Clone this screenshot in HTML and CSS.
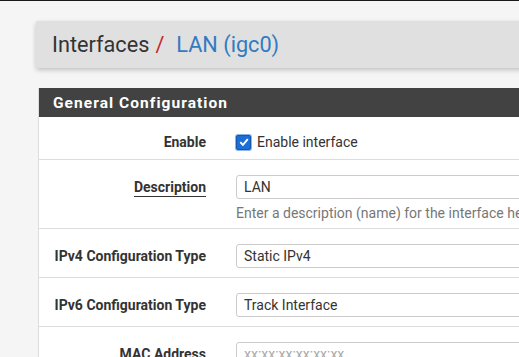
FILE: index.html
```html
<!DOCTYPE html>
<html>
<head>
<meta charset="utf-8">
<link rel="stylesheet" href="styles.css">
</head>
<body>
<div class="topline"></div>
<div class="page">
  <div class="breadcrumb">
    <span class="crumb">Interfaces</span><span class="sep">/</span><span class="link">LAN (igc0)</span>
  </div>
  <div class="panel">
    <div class="panel-heading">General Configuration</div>
    <div class="row row-enable">
      <div class="label">Enable</div>
      <div class="field">
        <label class="check"><span class="box"><svg width="12" height="12" viewBox="0 0 12 12"><path d="M2.3 6.2 L4.9 8.8 L9.8 3.2" fill="none" stroke="#fff" stroke-width="1.9"/></svg></span>Enable interface</label>
      </div>
    </div>
    <div class="row row-desc">
      <div class="label"><span class="u">Description</span></div>
      <div class="field">
        <div class="input">LAN</div>
        <div class="help">Enter a description (name) for the interface here.</div>
      </div>
    </div>
    <div class="row row-sel">
      <div class="label">IPv4 Configuration Type</div>
      <div class="field"><div class="input">Static IPv4</div></div>
    </div>
    <div class="row row-sel">
      <div class="label">IPv6 Configuration Type</div>
      <div class="field"><div class="input">Track Interface</div></div>
    </div>
    <div class="row row-sel">
      <div class="label">MAC Address</div>
      <div class="field"><div class="input placeholder">xx:xx:xx:xx:xx:xx</div></div>
    </div>
  </div>
</div>
</body>
</html>
```
FILE: styles.css
```css
html, body {
  margin: 0;
  padding: 0;
}
body {
  background: #f5f5f5;
  font-family: Roboto, "Liberation Sans", sans-serif;
  color: #333;
  overflow: hidden;
  width: 519px;
  height: 357px;
}
.topline {
  height: 1px;
  background: #1a1a1a;
}
.page {
  padding: 20px 0 0 36px;
}
.breadcrumb {
  width: 700px;
  height: 47px;
  background: #e0e0e0;
  box-shadow: 0 2px 5px rgba(0, 0, 0, 0.22);
  border-radius: 2px;
  box-sizing: border-box;
  padding-left: 16px;
  display: flex;
  align-items: center;
  font-size: 21.7px;
  white-space: nowrap;
}
.crumb {
  color: #333;
}
.sep {
  color: #c62828;
  margin: 0 12px 0 6px;
}
.link {
  color: #317bc1;
}
.panel {
  margin-top: 20px;
  margin-left: 2px;
  width: 700px;
  background: #fff;
  border-left: 1px solid #ddd;
}
.panel-heading {
  height: 29px;
  background: #424242;
  color: #fff;
  font-weight: bold;
  font-size: 15.5px;
  letter-spacing: 1.05px;
  padding-left: 14px;
  display: flex;
  align-items: center;
}
.row {
  display: grid;
  grid-template-columns: 182px 1fr;
  border-bottom: 1px solid #ddd;
  font-size: 14px;
  line-height: 16px;
}
.label {
  font-weight: bold;
  text-align: right;
  padding-right: 15px;
  color: #333;
  white-space: nowrap;
}
.u {
  border-bottom: 1px solid #333;
  padding-bottom: 1px;
}
.field {
  padding-left: 15px;
  min-width: 0;
}
.row-enable {
  height: 43px;
  box-sizing: border-box;
  padding-top: 17px;
}
.check {
  display: flex;
  align-items: center;
  color: #333;
}
.box {
  width: 13px;
  height: 13px;
  background: #1c6ed5;
  border: 1px solid #1558b0;
  border-radius: 2px;
  display: inline-flex;
  align-items: center;
  justify-content: center;
  margin-right: 6px;
  box-shadow: 0 0 0 1px #8ab4ea;
}
.row-desc {
  padding: 15px 0 7px;
}
.row-desc .label {
  padding-top: 4px;
}
.input {
  height: 24px;
  box-sizing: border-box;
  border: 1px solid #ccc;
  border-radius: 3px;
  padding-left: 7px;
  display: flex;
  align-items: center;
  color: #333;
  background: #fff;
  white-space: nowrap;
}
.placeholder {
  color: #aaa;
}
.help {
  color: #777;
  margin-top: 6px;
  white-space: nowrap;
}
.row-sel {
  padding: 15px 0 9px;
  align-items: center;
}
```
